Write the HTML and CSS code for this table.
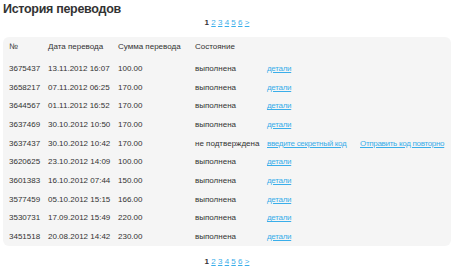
FILE: index.html
```html
<!DOCTYPE html>
<html lang="ru">
<head>
<meta charset="utf-8">
<title>История переводов</title>
<link rel="stylesheet" href="styles.css">
</head>
<body>
<div class="page">
  <h1 class="title">История переводов</h1>
  <div class="pager"><b>1</b> <a href="#">2</a> <a href="#">3</a> <a href="#">4</a> <a href="#">5</a> <a href="#">6</a> <a href="#">&gt;</a></div>
  <div class="box">
    <table class="grid">
      <thead>
        <tr><th class="c1">№</th><th class="c2">Дата перевода</th><th class="c3">Сумма перевода</th><th class="c4">Состояние</th><th class="c5"></th><th></th></tr>
      </thead>
      <tbody>
        <tr><td>3675437</td><td>13.11.2012 16:07</td><td>100.00</td><td>выполнена</td><td><a href="#">детали</a></td><td></td></tr>
        <tr><td>3658217</td><td>07.11.2012 06:25</td><td>170.00</td><td>выполнена</td><td><a href="#">детали</a></td><td></td></tr>
        <tr><td>3644567</td><td>01.11.2012 16:52</td><td>170.00</td><td>выполнена</td><td><a href="#">детали</a></td><td></td></tr>
        <tr><td>3637469</td><td>30.10.2012 10:50</td><td>170.00</td><td>выполнена</td><td><a href="#">детали</a></td><td></td></tr>
        <tr><td>3637437</td><td>30.10.2012 10:42</td><td>170.00</td><td>не подтверждена</td><td><a href="#">введите секретный код</a></td><td><a href="#">Отправить код повторно</a></td></tr>
        <tr><td>3620625</td><td>23.10.2012 14:09</td><td>100.00</td><td>выполнена</td><td><a href="#">детали</a></td><td></td></tr>
        <tr><td>3601383</td><td>16.10.2012 07:44</td><td>150.00</td><td>выполнена</td><td><a href="#">детали</a></td><td></td></tr>
        <tr><td>3577459</td><td>05.10.2012 15:15</td><td>166.00</td><td>выполнена</td><td><a href="#">детали</a></td><td></td></tr>
        <tr><td>3530731</td><td>17.09.2012 15:49</td><td>220.00</td><td>выполнена</td><td><a href="#">детали</a></td><td></td></tr>
        <tr><td>3451518</td><td>20.08.2012 14:42</td><td>230.00</td><td>выполнена</td><td><a href="#">детали</a></td><td></td></tr>
      </tbody>
    </table>
  </div>
  <div class="pager bottom"><b>1</b> <a href="#">2</a> <a href="#">3</a> <a href="#">4</a> <a href="#">5</a> <a href="#">6</a> <a href="#">&gt;</a></div>
</div>
</body>
</html>
```
FILE: styles.css
```css
* { box-sizing: border-box; }
html, body { margin: 0; padding: 0; background: #fff; }
body {
  font-family: "Liberation Sans", Arial, sans-serif;
  color: #333;
  font-size: 8px;
}
.page { padding: 0 3px; }
.title {
  margin: 0;
  padding-top: 1px;
  height: 18px;
  font-size: 12.5px;
  line-height: 17px;
  font-weight: bold;
  letter-spacing: -0.3px;
  color: #333;
}
.pager {
  text-align: center;
  font-size: 8px;
  line-height: 10px;
  height: 19px;
}
.pager b { color: #333; }
.pager a { color: #3aaeea; }
.pager.bottom { margin-top: 11px; }
.box {
  background: #f5f5f5;
  border-radius: 6px;
  padding: 0 0 0 6px;
}
.grid {
  border-collapse: collapse;
  width: 100%;
}
.grid th, .grid td {
  text-align: left;
  font-weight: normal;
  padding: 6px 0 0 0;
  line-height: 8px;
  white-space: nowrap;
  vertical-align: top;
}
.grid thead tr { height: 22px; }
.grid tbody tr { height: 18.67px; }
.c1 { width: 39px; }
.c2 { width: 70px; }
.c3 { width: 77px; }
.c4 { width: 72px; }
.c5 { width: 93px; }
.grid a { color: #3aaeea; letter-spacing: -0.3px; }
```
